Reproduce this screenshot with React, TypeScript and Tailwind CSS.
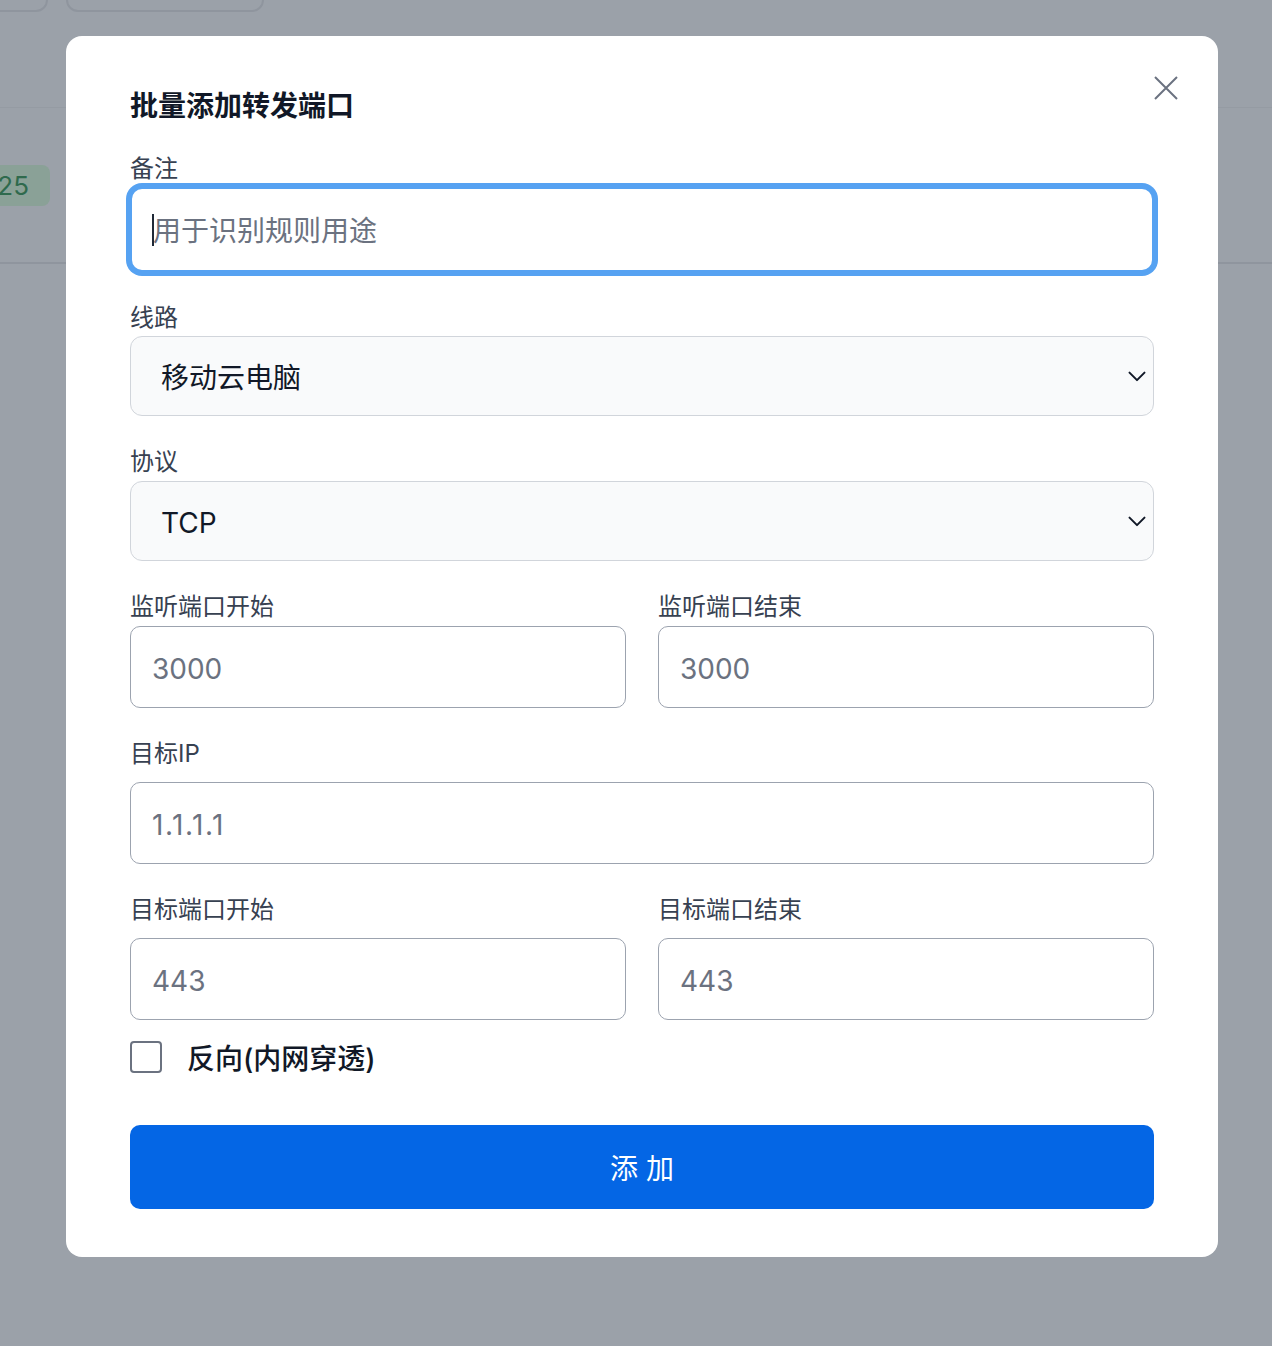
import React from 'react'

const font = { fontFamily: 'Inter, "Noto Sans CJK SC", "Noto Sans", sans-serif' }

function Label({ text, className = '' }: { text: string; className?: string }) {
  return <div className={`pt-[4px] text-[24px] leading-[32px] text-[#374151] ${className}`}>{text}</div>
}

function Select({ value, className = '' }: { value: string; className?: string }) {
  return (
    <div className={`relative ${className}`}>
      <select
        defaultValue={value}
        className="h-[80px] w-full appearance-none rounded-[12px] border border-[#d1d5db] bg-[#f9fafb] pl-[30px] pt-[4px] text-[28px] text-[#111827] outline-none"
      >
        <option>{value}</option>
      </select>
      <svg
        className="pointer-events-none absolute right-[7px] top-1/2 h-[20px] w-[20px] -translate-y-1/2"
        viewBox="0 0 24 24"
        fill="none"
        stroke="#111827"
        strokeWidth={2.4}
        strokeLinecap="round"
        strokeLinejoin="round"
      >
        <path d="M3 8l9 9 9-9" />
      </svg>
    </div>
  )
}

function TextInput({ placeholder, className = '' }: { placeholder: string; className?: string }) {
  return (
    <input
      placeholder={placeholder}
      className={`h-[82px] w-full rounded-[10px] border-[1.5px] border-[#9ca3af] bg-white px-[21px] pt-[4px] text-[28px] text-[#111827] outline-none placeholder:text-[#6b7280] ${className}`}
    />
  )
}

export default function App() {
  return (
    <div className="relative h-[1346px] w-full overflow-hidden bg-[#9ba1a9]" style={font}>
      {/* page behind the overlay */}
      <div className="absolute left-[-20px] top-[-30px] h-[42px] w-[68px] rounded-[12px] border-2 border-[#8f959e]" />
      <div className="absolute left-[66px] top-[-30px] h-[42px] w-[198px] rounded-[12px] border-2 border-[#8f959e]" />
      <div className="absolute left-0 right-0 top-[107px] h-px bg-[#959ba3]" />
      <div className="absolute left-[-12px] top-[165px] flex h-[41px] w-[62px] items-center justify-end rounded-[8px] bg-[#8aa197] pr-[21px] text-[26px] text-[#2f6a4d]">
        25
      </div>
      <div className="absolute left-0 right-0 top-[262px] h-[2px] bg-[#8f959e]" />

      {/* modal */}
      <div className="relative ml-[66px] mt-[36px] w-[1152px] rounded-[16px] bg-white px-[64px] pb-[48px] pt-[52px]">
        <button className="absolute right-[40px] top-[40px] h-[24px] w-[24px]" aria-label="close">
          <svg viewBox="0 0 24 24" fill="none" stroke="#6b7280" strokeWidth={2} className="h-[24px] w-[24px]">
            <path d="M1 1l22 22M23 1L1 23" />
          </svg>
        </button>

        <h2 className="text-[28px] font-semibold leading-[36px] text-[#111827]">批量添加转发端口</h2>

        <Label text="备注" className="mt-[25px]" />
        <div className="relative mt-[2px]">
          <input
            placeholder="用于识别规则用途"
            className="h-[85px] w-full rounded-[12px] border-2 border-[#56a2f2] bg-white px-[21px] pt-[2px] text-[28px] text-[#111827] outline-none ring-[4px] ring-[#56a2f2] placeholder:text-[#6b7280]"
          />
          <span className="absolute left-[22px] top-[27px] h-[32px] w-[2px] bg-[#1f2937]" />
        </div>

        <Label text="线路" className="mt-[26px]" />
        <Select value="移动云电脑" className="mt-[2px]" />

        <Label text="协议" className="mt-[26px]" />
        <Select value="TCP" className="mt-[3px]" />

        <div className="mt-[26px] grid grid-cols-2 gap-x-[32px]">
          <div>
            <Label text="监听端口开始" />
            <div className="mt-[3px]">
              <TextInput placeholder="3000" />
            </div>
          </div>
          <div>
            <Label text="监听端口结束" />
            <div className="mt-[3px]">
              <TextInput placeholder="3000" />
            </div>
          </div>
        </div>

        <Label text="目标IP" className="mt-[26px]" />
        <div className="mt-[12px]">
          <TextInput placeholder="1.1.1.1" className="placeholder:tracking-[1.5px]" />
        </div>

        <div className="mt-[26px] grid grid-cols-2 gap-x-[32px]">
          <div>
            <Label text="目标端口开始" />
            <div className="mt-[12px]">
              <TextInput placeholder="443" />
            </div>
          </div>
          <div>
            <Label text="目标端口结束" />
            <div className="mt-[12px]">
              <TextInput placeholder="443" />
            </div>
          </div>
        </div>

        <label className="mt-[19px] flex items-center gap-[25px]">
          <span className="h-[32px] w-[32px] rounded-[4px] border-2 border-[#6b7280] bg-white" />
          <span className="pt-[4px] text-[28px] font-medium leading-[32px] text-[#111827]">反向(内网穿透)</span>
        </label>

        <button className="mt-[50px] h-[84px] w-full rounded-[10px] bg-[#0466e5] pt-[4px] text-[28px] text-white">
          添 加
        </button>
      </div>
    </div>
  )
}
